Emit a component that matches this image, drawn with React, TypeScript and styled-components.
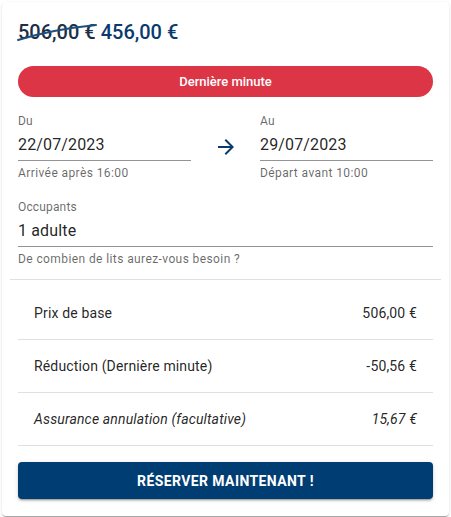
import React from "react";
import styled, { createGlobalStyle } from "styled-components";

const Global = createGlobalStyle`
  html, body { margin: 0; padding: 0; background: #ffffff; }
  body { font-family: Roboto, "Liberation Sans", Arial, sans-serif; color: rgba(0,0,0,0.87); }
  * { box-sizing: border-box; }
`;

const Page = styled.div`
  padding: 2px 2px 1px 2px;
  width: 451px;
`;

const Card = styled.div`
  width: 447px;
  height: 514px;
  background: #fff;
  border-radius: 4px;
  box-shadow: 0 2px 1px -1px rgba(0,0,0,0.2), 0 1px 1px 0 rgba(0,0,0,0.14), 0 1px 3px 0 rgba(0,0,0,0.12);
  display: flex;
  flex-direction: column;
`;

const Section = styled.div`
  padding: 0 16px;
  display: flex;
  flex-direction: column;
`;

const PriceLine = styled.div`
  padding-top: 16px;
  font-size: 20px;
  line-height: 28px;
  font-weight: 500;
  display: flex;
  gap: 5px;
`;

const OldPrice = styled.span`
  position: relative;
  color: #1d2f47;
`;

const Strike = styled.svg`
  position: absolute;
  left: -1px;
  top: 6px;
  width: 80px;
  height: 18px;
  overflow: visible;
`;

const NewPrice = styled.span`
  color: #0a3b6e;
`;

const Pill = styled.div`
  margin-top: 20px;
  height: 31px;
  border-radius: 16px;
  background: #dc3545;
  color: #fff;
  font-size: 13px;
  font-weight: 500;
  display: flex;
  align-items: center;
  justify-content: center;
`;

const DateGrid = styled.div`
  margin-top: 16px;
  display: grid;
  grid-template-columns: 1fr 69px 1fr;
  align-items: center;
`;

const Field = styled.div<{ $gap?: number }>`
  display: flex;
  flex-direction: column;
  margin-top: ${(p) => p.$gap ?? 0}px;
`;

const Label = styled.div`
  font-size: 12px;
  line-height: 16px;
  letter-spacing: 0.15px;
  color: rgba(0,0,0,0.6);
`;

const Value = styled.div`
  margin-top: 4px;
  font-size: 16px;
  line-height: 24px;
  letter-spacing: 0.15px;
  color: rgba(0,0,0,0.87);
  padding-bottom: 3px;
  border-bottom: 1px solid rgba(0,0,0,0.42);
`;

const Helper = styled.div`
  margin-top: 4px;
  font-size: 12px;
  line-height: 16px;
  color: rgba(0,0,0,0.6);
  letter-spacing: 0.4px;
`;

const ArrowCell = styled.div`
  display: flex;
  justify-content: center;
  align-items: center;
  color: #0a3b6e;
`;

const Divider = styled.hr<{ $inset: number }>`
  margin: 0 ${(p) => p.$inset}px;
  border: none;
  border-top: 1px solid rgba(0,0,0,0.12);
  height: 0;
`;

const List = styled.div`
  padding: 7px 16px 0 16px;
  display: flex;
  flex-direction: column;
`;

const Row = styled.div<{ $italic?: boolean }>`
  height: 53px;
  padding: 0 16px;
  display: flex;
  align-items: center;
  justify-content: space-between;
  font-size: 14px;
  letter-spacing: 0.15px;
  color: rgba(0,0,0,0.87);
  font-style: ${(p) => (p.$italic ? "italic" : "normal")};
  border-bottom: 1px solid rgba(0,0,0,0.12);
`;

const Button = styled.button`
  margin: 16px 16px 0 16px;
  height: 37px;
  border: none;
  border-radius: 4px;
  background: #003d73;
  color: #fff;
  font-family: Roboto, "Liberation Sans", Arial, sans-serif;
  font-size: 14px;
  font-weight: 700;
  letter-spacing: 0.4px;
  text-transform: uppercase;
  box-shadow: 0 3px 1px -2px rgba(0,0,0,0.2), 0 2px 2px 0 rgba(0,0,0,0.14), 0 1px 5px 0 rgba(0,0,0,0.12);
  cursor: pointer;
`;

export default function App() {
  return (
    <Page>
      <Global />
      <Card>
        <Section>
          <PriceLine>
            <OldPrice>
              506,00 €
              <Strike viewBox="0 0 80 18">
                <path d="M1 16 C 20 10, 50 4, 79 1" stroke="#1f4e7f" strokeWidth="2" fill="none" strokeLinecap="round" />
              </Strike>
            </OldPrice>
            <NewPrice>456,00 €</NewPrice>
          </PriceLine>
          <Pill>Dernière minute</Pill>
          <DateGrid>
            <Field>
              <Label>Du</Label>
              <Value>22/07/2023</Value>
              <Helper>Arrivée après 16:00</Helper>
            </Field>
            <ArrowCell>
              <svg width="24" height="24" viewBox="0 0 24 24" fill="currentColor">
                <path d="M12 4l-1.41 1.41L16.17 11H4v2h12.17l-5.58 5.59L12 20l8-8z" />
              </svg>
            </ArrowCell>
            <Field>
              <Label>Au</Label>
              <Value>29/07/2023</Value>
              <Helper>Départ avant 10:00</Helper>
            </Field>
          </DateGrid>
          <Field $gap={18}>
            <Label>Occupants</Label>
            <Value>1 adulte</Value>
            <Helper>De combien de lits aurez-vous besoin ?</Helper>
          </Field>
        </Section>
        <div style={{ height: 12 }} />
        <Divider $inset={8} />
        <List>
          <Row>
            <span>Prix de base</span>
            <span>506,00 €</span>
          </Row>
          <Row>
            <span>Réduction (Dernière minute)</span>
            <span>-50,56 €</span>
          </Row>
          <Row $italic>
            <span>Assurance annulation (facultative)</span>
            <span>15,67 €</span>
          </Row>
        </List>
        <Button>Réserver maintenant !</Button>
      </Card>
    </Page>
  );
}
